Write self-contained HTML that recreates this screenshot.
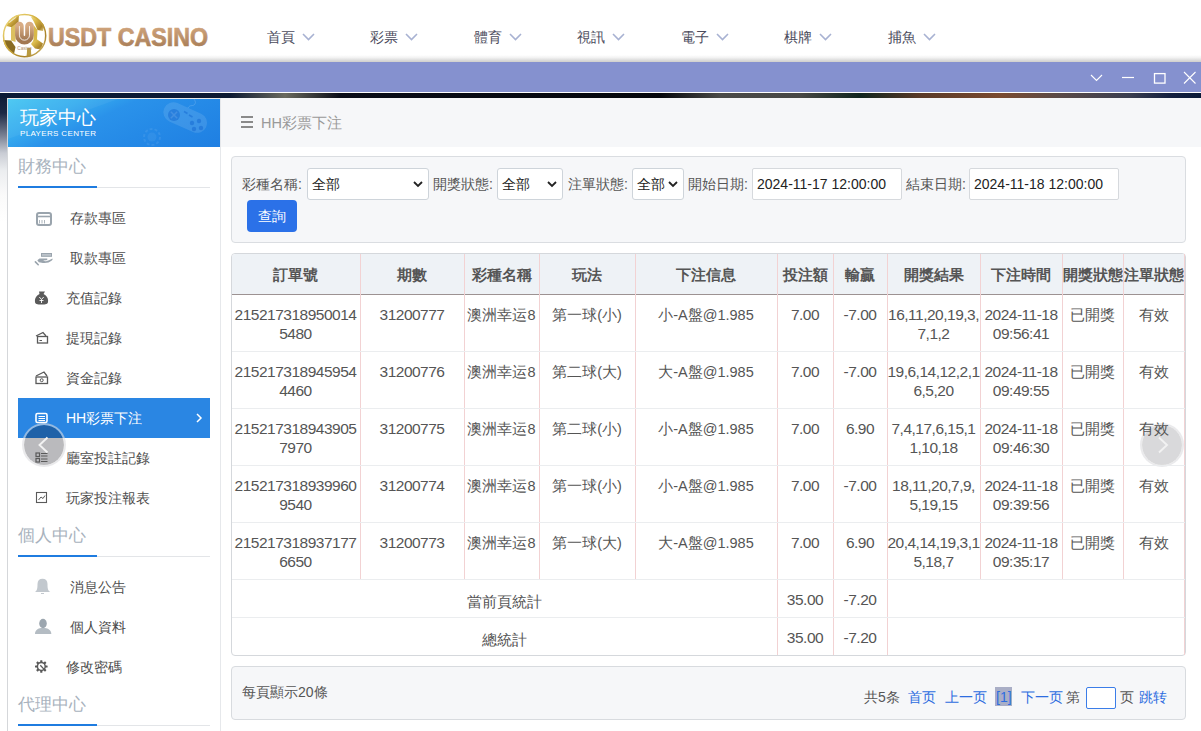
<!DOCTYPE html><html><head><meta charset="utf-8"><style>
*{box-sizing:border-box;margin:0;padding:0}
html,body{width:1201px;height:731px;overflow:hidden;background:#fff;font-family:"Liberation Sans",sans-serif;color:#333}
.abs{position:absolute}
.t{position:absolute;white-space:nowrap}
#hdr{left:0;top:0;width:1201px;height:62px;background:linear-gradient(#fff 0,#fff 55px,#f3f3f3 57.5px,#d9d9d9 60.5px,#d0cfcb 62px)}
#purple{left:0;top:62px;width:1201px;height:30px;background:#8591cf}
#wline{left:0;top:92px;width:1201px;height:1px;background:#fff}
#bgimg{left:0;top:93px;width:1201px;height:638px;background:linear-gradient(#0d1a35 0,#1c2944 20px,#7b8294 43px,#c9ccd4 60px,#eceef0 78px,#fafafa 102px,#fff 130px,#fff 100%)}
#strip{left:0;top:93px;width:1201px;height:5px;background:linear-gradient(90deg,#0b1a36 0px,#0d1a33 230px,#6a6a5e 285px,#0a0d18 340px,#05070c 660px,#4a4a48 720px,#484846 800px,#10251f 860px,#5a3a28 920px,#7a4a30 1000px,#5a4a48 1060px,#3a3e50 1130px,#142040 1170px,#0a1a38 1201px)}
#panel{left:7px;top:98px;width:1194px;height:633px;background:#fff;border-left:1px solid #d5d7da;border-top:1px solid #e8e8e8}
#pc{left:8px;top:99px;width:212px;height:48px;overflow:hidden;background:linear-gradient(155deg,#46c6f2 0,#36acef 25%,#2a92ea 42%,#258ae7 65%,#1f7fe2 100%)}
#crumb{left:220px;top:98px;width:981px;height:49px;background:#f6f7f9}
#sideborder{left:220px;top:98px;width:1px;height:633px;background:#e6e8eb}
.nav{position:absolute;top:28px;padding-left:1px;font-size:14px;color:#4b4b5c;line-height:18px;white-space:nowrap}
.nav svg{position:absolute;left:36px;top:5px}
.sh{position:absolute;left:18px;font-size:17px;color:#a8b2bd;line-height:20px;white-space:nowrap}
.shl{position:absolute;left:18px;width:192px;height:1px;background:#e3e5e8}
.shb{position:absolute;left:18px;width:79px;height:2px;background:#1f7ce0}
.mi{position:absolute;font-size:14px;color:#4d4d4d;line-height:18px;white-space:nowrap}
.ico{position:absolute}
.lbl{position:absolute;top:175px;font-size:14px;color:#555;line-height:18px;white-space:nowrap}
.sel{position:absolute;top:168px;height:32px;background:#fff;border:1px solid #ced4da;border-radius:3px;font-size:14px;color:#222;line-height:30px;padding-left:4px;white-space:nowrap}
.sel svg{position:absolute;right:5px;top:11px}
.th{position:absolute;top:254px;height:41px;line-height:41px;text-align:center;font-size:15px;font-weight:bold;color:#555;white-space:nowrap}
.td{position:absolute;text-align:center;font-size:15.5px;color:#555;line-height:19px;white-space:nowrap;letter-spacing:-0.5px}
.tc{position:absolute;text-align:center;font-size:14.5px;color:#555;line-height:19px;white-space:nowrap}
.vl{position:absolute;width:1px;background:#f2d2d3}
.hl{position:absolute;height:1px;background:#ebedef}
.pg{position:absolute;top:688px;font-size:14px;line-height:18px;white-space:nowrap;color:#555}
.bl{color:#2d6de0}
</style></head><body>
<div id="hdr" class="abs"></div>
<svg class="abs" style="left:0;top:8px" width="215" height="54" viewBox="0 0 215 54">
<defs>
<linearGradient id="gold" x1="0" y1="0" x2="1" y2="1"><stop offset="0" stop-color="#f0de8a"/><stop offset=".4" stop-color="#d6b444"/><stop offset=".75" stop-color="#a8822a"/><stop offset="1" stop-color="#e6d282"/></linearGradient>
<linearGradient id="cop" x1="0" y1="0" x2="0" y2="1"><stop offset="0" stop-color="#d8ac84"/><stop offset="1" stop-color="#a27852"/></linearGradient>
<clipPath id="ball"><circle cx="24.6" cy="27.65" r="21.8"/></clipPath>
</defs>
<circle cx="24.6" cy="27.65" r="21.8" fill="#fff"/>
<g clip-path="url(#ball)">
<polygon points="31,9 36,7 41,10.5 44.5,17 43,23 37.5,22 34,14" fill="url(#gold)"/>
<polygon points="8.5,12 13.5,7.5 19,6.800000000000001 18.5,14 13,19.5 6.5,18" fill="url(#gold)"/>
<polygon points="2.5,32 11,32.5 15.5,39 14,46 8,42.5 4,37" fill="#8a6c22"/>
<polygon points="35,30 43,35.5 41,41.5 35,40.5 31,36" fill="url(#gold)"/>
<polygon points="27.2,40 30.8,40 31.5,50 26.5,50" fill="#b89a40"/>
<polygon points="11,19.5 16,15.5 15.5,34 11,32.5" fill="#dcc060"/>
<polygon points="33.5,17 37.5,22 37,31.5 33.5,34" fill="#d8b848"/>
<path d="M9 14.5 L16 9" stroke="#fff" stroke-width="1.5" opacity=".7"/>
</g>
<circle cx="24.6" cy="27.65" r="21.1" fill="none" stroke="url(#gold)" stroke-width="1.5"/>
<path d="M19.4 18.1 V27.15 a5.05 5.05 0 0 0 10.1 0 V18.1" fill="none" stroke="url(#cop)" stroke-width="8.6" stroke-linecap="round"/>
<path d="M19.4 18.1 V27.15 a5.05 5.05 0 0 0 10.1 0 V18.1" fill="none" stroke="#fff" stroke-width="0.9" opacity=".9"/>
<text x="24.5" y="41.8" font-size="4.6" fill="#b09070" text-anchor="middle" font-family="Liberation Sans">Casino</text>
<text x="48" y="37.6" font-size="25.3" font-weight="bold" fill="url(#cop)" stroke="url(#cop)" stroke-width="0.7" font-family="Liberation Sans" textLength="160" lengthAdjust="spacingAndGlyphs">USDT CASINO</text>
</svg>
<div class="nav" style="left:266px">首頁<svg width="13" height="8" viewBox="0 0 13 8"><path d="M1 1 L6.5 6.5 L12 1" fill="none" stroke="#a8b2d2" stroke-width="1.6"/></svg></div>
<div class="nav" style="left:369px">彩票<svg width="13" height="8" viewBox="0 0 13 8"><path d="M1 1 L6.5 6.5 L12 1" fill="none" stroke="#a8b2d2" stroke-width="1.6"/></svg></div>
<div class="nav" style="left:473px">體育<svg width="13" height="8" viewBox="0 0 13 8"><path d="M1 1 L6.5 6.5 L12 1" fill="none" stroke="#a8b2d2" stroke-width="1.6"/></svg></div>
<div class="nav" style="left:576px">視訊<svg width="13" height="8" viewBox="0 0 13 8"><path d="M1 1 L6.5 6.5 L12 1" fill="none" stroke="#a8b2d2" stroke-width="1.6"/></svg></div>
<div class="nav" style="left:680px">電子<svg width="13" height="8" viewBox="0 0 13 8"><path d="M1 1 L6.5 6.5 L12 1" fill="none" stroke="#a8b2d2" stroke-width="1.6"/></svg></div>
<div class="nav" style="left:783px">棋牌<svg width="13" height="8" viewBox="0 0 13 8"><path d="M1 1 L6.5 6.5 L12 1" fill="none" stroke="#a8b2d2" stroke-width="1.6"/></svg></div>
<div class="nav" style="left:887px">捕魚<svg width="13" height="8" viewBox="0 0 13 8"><path d="M1 1 L6.5 6.5 L12 1" fill="none" stroke="#a8b2d2" stroke-width="1.6"/></svg></div>
<div id="purple" class="abs"></div>
<svg class="abs" style="left:1085px;top:68px" width="116" height="20" viewBox="1085 68 116 20">
<path d="M1091 75 L1096.5 80.5 L1102 75" fill="none" stroke="#fff" stroke-width="1.1"/>
<path d="M1122 77.5 H1134" stroke="#fff" stroke-width="1.2"/>
<rect x="1154.5" y="73.6" width="10.5" height="9.5" fill="none" stroke="#fff" stroke-width="1.3"/>
<path d="M1184 72 L1195.5 83.5 M1195.5 72 L1184 83.5" stroke="#fff" stroke-width="1.1"/>
</svg>
<div id="wline" class="abs"></div>
<div id="bgimg" class="abs"></div>
<div id="strip" class="abs"></div>
<div id="panel" class="abs"></div>
<div id="pc" class="abs">
<svg class="abs" style="left:0;top:0" width="212" height="48" viewBox="0 0 212 48">
<path d="M0 0 H110 L0 40 Z" fill="#fff" opacity=".05"/>
<g transform="rotate(24 177 19)"><rect x="154" y="8.5" width="46" height="20" rx="10" fill="#fff" opacity=".11"/></g>
<circle cx="166" cy="16" r="6" fill="#1468d2" opacity=".5"/>
<path d="M162.8 12.8 L169.2 19.2 M169.2 12.8 L162.8 19.2" stroke="#fff" stroke-width="1.5" opacity=".12"/>
<path d="M176 12.5 L179.5 14.5 M181 16 L184.5 18" stroke="#1468d2" stroke-width="1.6" opacity=".5"/>
<g fill="#1468d2" opacity=".5"><circle cx="184" cy="24" r="2.2"/><circle cx="191" cy="22" r="2.2"/><circle cx="186" cy="30" r="2.2"/><circle cx="193" cy="29" r="2.2"/></g>
<path d="M180 9 C182 5 185 8 187 5 C188 3 187 1 185 -1" stroke="#fff" stroke-width="1" opacity=".15" fill="none"/>
<circle cx="144" cy="38" r="8" fill="none" stroke="#fff" stroke-width="2" opacity=".08" stroke-dasharray="3 2"/>
<circle cx="144" cy="38" r="4.5" fill="#fff" opacity=".06"/>
<text x="12" y="24.5" font-size="19" fill="#fff" font-family="Liberation Sans">玩家中心</text>
<text x="12" y="36.8" font-size="8" fill="#fff" font-family="Liberation Sans" textLength="76" lengthAdjust="spacing">PLAYERS  CENTER</text>
</svg></div>
<div class="sh" style="top:157px">財務中心</div>
<div class="shl" style="top:187px"></div>
<div class="shb" style="top:186px"></div>
<div class="sh" style="top:526px">個人中心</div>
<div class="shl" style="top:556px"></div>
<div class="shb" style="top:555px"></div>
<div class="sh" style="top:695px">代理中心</div>
<div class="shl" style="top:725px"></div>
<div class="shb" style="top:724px"></div>
<div class="abs" style="left:18px;top:398px;width:192px;height:40px;background:#2a86e3"></div>
<div class="abs" style="left:22px;top:423px;width:44px;height:44px;border-radius:50%;background:rgba(0,0,12,0.27);background-clip:padding-box;border:2px solid rgba(220,220,224,.6)"></div>
<svg class="abs" style="left:0;top:0" width="1201" height="731" viewBox="0 0 1201 731"><path d="M47.5 437.5 L39.5 445 L47.5 452.5" fill="none" stroke="#f2f2f2" stroke-width="1.9"/></svg>
<svg class="abs" style="left:195px;top:412px" width="8" height="12" viewBox="0 0 8 12"><path d="M2 2 L6 6 L2 10" fill="none" stroke="#fff" stroke-width="1.5"/></svg>
<div class="mi" style="left:70px;top:209px;color:#4d4d4d">存款專區</div>
<div class="mi" style="left:70px;top:249px;color:#4d4d4d">取款專區</div>
<div class="mi" style="left:66px;top:289px;color:#4d4d4d">充值記錄</div>
<div class="mi" style="left:66px;top:329px;color:#4d4d4d">提現記錄</div>
<div class="mi" style="left:66px;top:369px;color:#4d4d4d">資金記錄</div>
<div class="mi" style="left:66px;top:409px;color:#fff">HH彩票下注</div>
<div class="mi" style="left:66px;top:449px;color:#4d4d4d">廳室投註記錄</div>
<div class="mi" style="left:66px;top:489px;color:#4d4d4d">玩家投注報表</div>
<div class="mi" style="left:70px;top:578px;color:#4d4d4d">消息公告</div>
<div class="mi" style="left:70px;top:618px;color:#4d4d4d">個人資料</div>
<div class="mi" style="left:66px;top:658px;color:#4d4d4d">修改密碼</div>
<svg class="abs" style="left:0;top:0;width:220px;height:731px" viewBox="0 0 220 731">
<!-- card -->
<rect x="37" y="213" width="14" height="12" rx="2" fill="none" stroke="#9aa4ad" stroke-width="2"/>
<path d="M37 216.5 H51" stroke="#9aa4ad" stroke-width="1.6"/>
<path d="M39.5 220 V223.5 M42 220 V223.5 M44.5 220 V223.5" stroke="#9aa4ad" stroke-width="0.8"/>
<!-- hand cash -->
<rect x="41.5" y="253.5" width="10" height="2.8" fill="#bcc3ca" stroke="#9aa4ad" stroke-width="1"/>
<path d="M37.3 260.3 L39.5 258.6 H47.2 Q48 259.6 46.5 260.2 L43.2 260.6 Q44 261.3 46 261.2 L49 260.2 L52.5 258.4 Q53 259.5 51.5 260.8 L48.5 262.6 Q46 263.2 43 263 L38.8 262.3 Z" fill="#9aa4ad"/>
<path d="M35.4 261.9 L38.2 264.7" stroke="#9aa4ad" stroke-width="1.6" stroke-linecap="round"/>
<!-- money bag -->
<path d="M39 291.5 H45 L43.5 294 C47 295.5 48.5 299 48 302 C47.7 304 46 304.5 41.5 304.5 C37 304.5 35.3 304 35 302 C34.5 299 36 295.5 39.5 294 Z" fill="#5a5a5a"/>
<path d="M39.3 297 L41.5 299.5 L43.7 297 M41.5 299.5 V303 M39.5 300.5 H43.5" stroke="#fff" stroke-width="0.9" fill="none"/>
<!-- cards stacked -->
<path d="M36 336 L43 332.5 L46 336" fill="none" stroke="#5a5a5a" stroke-width="1.3"/>
<rect x="37.5" y="336.5" width="10" height="6.5" fill="none" stroke="#5a5a5a" stroke-width="1.3"/>
<path d="M39.5 340.5 H42" stroke="#5a5a5a" stroke-width="1"/>
<!-- cash stack -->
<path d="M36 376 L44 372 L47 376" fill="none" stroke="#5a5a5a" stroke-width="1.3"/>
<rect x="36" y="377" width="11.5" height="6.5" fill="none" stroke="#5a5a5a" stroke-width="1.3"/>
<circle cx="41.7" cy="380.2" r="1.5" fill="none" stroke="#5a5a5a" stroke-width="1"/>
<!-- list white -->
<rect x="36" y="413.5" width="11" height="9" rx="1.5" fill="none" stroke="#fff" stroke-width="1.6"/>
<path d="M38.5 416.5 H45 M38.5 418.5 H45 M38.5 420.5 H45" stroke="#fff" stroke-width="1"/>
<!-- list bullets -->
<rect x="36" y="453" width="3.5" height="3.5" fill="none" stroke="#5a5a5a" stroke-width="1.2"/>
<rect x="36" y="458.5" width="3.5" height="3.5" fill="none" stroke="#5a5a5a" stroke-width="1.2"/>
<path d="M41 453.5 H47.5 M41 456 H47.5 M41 459 H47.5 M41 461.5 H47.5" stroke="#5a5a5a" stroke-width="1"/>
<!-- chart -->
<rect x="36.5" y="492.5" width="10" height="10" fill="none" stroke="#5a5a5a" stroke-width="1.1"/>
<path d="M38.5 500 L41 497 L43 498.5 L45 495.5" fill="none" stroke="#5a5a5a" stroke-width="1"/>
<!-- bell -->
<path d="M35 592 C37 590.5 37.5 589 37.5 584 C37.5 580.5 39.5 578.7 42.5 578.7 C45.5 578.7 47.5 580.5 47.5 584 C47.5 589 48 590.5 50.3 592 Z" fill="#c2c8ce"/>
<path d="M41 593.5 H44" stroke="#c2c8ce" stroke-width="1"/>
<!-- user -->
<ellipse cx="43" cy="623.5" rx="3.8" ry="4.7" fill="#9ca6af"/>
<path d="M35 634 C35 630 38 628.5 41 628 L45 628 C48 628.5 51.3 630 51.3 634 Z" fill="#b4bcc3"/>
<!-- gear -->
<g transform="translate(41.3 666.5)" fill="#5a5a5a">
<rect x="-1.1" y="-6.3" width="2.2" height="2.6" rx="0.5" transform="rotate(0)"/><rect x="-1.1" y="-6.3" width="2.2" height="2.6" rx="0.5" transform="rotate(45)"/><rect x="-1.1" y="-6.3" width="2.2" height="2.6" rx="0.5" transform="rotate(90)"/><rect x="-1.1" y="-6.3" width="2.2" height="2.6" rx="0.5" transform="rotate(135)"/><rect x="-1.1" y="-6.3" width="2.2" height="2.6" rx="0.5" transform="rotate(180)"/><rect x="-1.1" y="-6.3" width="2.2" height="2.6" rx="0.5" transform="rotate(225)"/><rect x="-1.1" y="-6.3" width="2.2" height="2.6" rx="0.5" transform="rotate(270)"/><rect x="-1.1" y="-6.3" width="2.2" height="2.6" rx="0.5" transform="rotate(315)"/>
<circle r="3.9" fill="none" stroke="#5a5a5a" stroke-width="1.5"/>
<path d="M-1 -1.2 L2.6 2.6" stroke="#5a5a5a" stroke-width="1.3"/>
</g>
</svg>
<div id="crumb" class="abs"></div>
<div id="sideborder" class="abs"></div>
<svg class="abs" style="left:241px;top:115px" width="13" height="14" viewBox="0 0 13 14"><path d="M0 2 H12 M0 7 H12 M0 12 H12" stroke="#8a8a8a" stroke-width="2"/></svg>
<div class="t" style="left:261px;top:114px;font-size:14.5px;line-height:18px;color:#9a9a9a">HH彩票下注</div>
<div class="abs" style="left:231px;top:156px;width:955px;height:87px;background:#f6f7f9;border:1px solid #dadde1;border-radius:4px"></div>
<div class="lbl" style="left:242px">彩種名稱:</div>
<div class="lbl" style="left:433px">開獎狀態:</div>
<div class="lbl" style="left:568px">注單狀態:</div>
<div class="lbl" style="left:688px">開始日期:</div>
<div class="lbl" style="left:906px">結束日期:</div>
<div class="sel" style="left:307px;width:122px">全部<svg width="10" height="8" viewBox="0 0 10 8"><path d="M1 2 L5 6 L9 2" fill="none" stroke="#222" stroke-width="1.8"/></svg></div>
<div class="sel" style="left:497px;width:66px">全部<svg width="10" height="8" viewBox="0 0 10 8"><path d="M1 2 L5 6 L9 2" fill="none" stroke="#222" stroke-width="1.8"/></svg></div>
<div class="sel" style="left:632px;width:52px">全部<svg width="10" height="8" viewBox="0 0 10 8"><path d="M1 2 L5 6 L9 2" fill="none" stroke="#222" stroke-width="1.8"/></svg></div>
<div class="sel" style="left:752px;width:150px;border-color:#d6d9dd;border-radius:2px;padding-left:4px">2024-11-17 12:00:00</div>
<div class="sel" style="left:969px;width:150px;border-color:#d6d9dd;border-radius:2px;padding-left:4px">2024-11-18 12:00:00</div>
<div class="abs" style="left:247px;top:200px;width:50px;height:32px;background:#2b71e8;border-radius:4px;color:#fff;font-size:14px;line-height:32px;text-align:center">查詢</div>
<div class="abs" style="left:231px;top:253px;width:955px;height:403px;border:1px solid #d5d8dc;border-radius:4px;background:#fff"></div>
<div class="abs" style="left:232px;top:254px;width:953px;height:40px;background:#eef2f6;border-radius:3px 3px 0 0"></div>
<div class="abs" style="left:1140px;top:423px;width:44px;height:44px;border-radius:50%;background:rgba(0,0,12,0.15);background-clip:padding-box;border:2px solid rgba(220,220,224,.6)"></div>
<svg class="abs" style="left:0;top:0" width="1201" height="731" viewBox="0 0 1201 731"><path d="M1159 437.5 L1167 445 L1159 452.5" fill="none" stroke="#f2f2f2" stroke-width="1.9"/></svg>
<div class="th" style="left:231px;width:129px">訂單號</div>
<div class="th" style="left:360px;width:104px">期數</div>
<div class="th" style="left:464px;width:75px">彩種名稱</div>
<div class="th" style="left:539px;width:96px">玩法</div>
<div class="th" style="left:635px;width:142px">下注信息</div>
<div class="th" style="left:777px;width:56px">投注額</div>
<div class="th" style="left:833px;width:54px">輸贏</div>
<div class="th" style="left:887px;width:93px">開獎結果</div>
<div class="th" style="left:980px;width:82px">下注時間</div>
<div class="th" style="left:1062px;width:61px">開獎狀態</div>
<div class="th" style="left:1123px;width:61px">注單狀態</div>
<div class="abs" style="left:232px;top:294px;width:953px;height:1px;background:#9c9292"></div>
<div class="vl" style="left:360px;top:254px;height:325px"></div>
<div class="vl" style="left:464px;top:254px;height:325px"></div>
<div class="vl" style="left:539px;top:254px;height:325px"></div>
<div class="vl" style="left:635px;top:254px;height:325px"></div>
<div class="vl" style="left:777px;top:254px;height:325px"></div>
<div class="vl" style="left:833px;top:254px;height:325px"></div>
<div class="vl" style="left:887px;top:254px;height:325px"></div>
<div class="vl" style="left:980px;top:254px;height:325px"></div>
<div class="vl" style="left:1062px;top:254px;height:325px"></div>
<div class="vl" style="left:1123px;top:254px;height:325px"></div>
<div class="vl" style="left:1184px;top:254px;height:325px"></div>
<div class="vl" style="left:777px;top:579px;height:76px"></div>
<div class="vl" style="left:833px;top:579px;height:76px"></div>
<div class="vl" style="left:887px;top:579px;height:76px"></div>
<div class="vl" style="left:1184px;top:579px;height:76px"></div>
<div class="hl" style="left:232px;top:351px;width:953px"></div>
<div class="hl" style="left:232px;top:408px;width:953px"></div>
<div class="hl" style="left:232px;top:465px;width:953px"></div>
<div class="hl" style="left:232px;top:522px;width:953px"></div>
<div class="hl" style="left:232px;top:579px;width:953px"></div>
<div class="hl" style="left:232px;top:617px;width:953px"></div>
<div class="td" style="left:231px;width:129px;top:305px">215217318950014<br>5480</div>
<div class="td" style="left:360px;width:104px;top:305px">31200777</div>
<div class="tc" style="left:464px;width:75px;top:306px">澳洲幸运8</div>
<div class="tc" style="left:539px;width:96px;top:306px">第一球(小)</div>
<div class="tc" style="left:635px;width:142px;top:306px">小-A盤@1.985</div>
<div class="td" style="left:777px;width:56px;top:305px">7.00</div>
<div class="td" style="left:833px;width:54px;top:305px">-7.00</div>
<div class="td" style="left:887px;width:93px;top:305px">16,11,20,19,3,<br>7,1,2</div>
<div class="td" style="left:980px;width:82px;top:305px">2024-11-18<br>09:56:41</div>
<div class="tc" style="left:1062px;width:61px;top:306px">已開獎</div>
<div class="tc" style="left:1123px;width:61px;top:306px">有效</div>
<div class="td" style="left:231px;width:129px;top:362px">215217318945954<br>4460</div>
<div class="td" style="left:360px;width:104px;top:362px">31200776</div>
<div class="tc" style="left:464px;width:75px;top:363px">澳洲幸运8</div>
<div class="tc" style="left:539px;width:96px;top:363px">第二球(大)</div>
<div class="tc" style="left:635px;width:142px;top:363px">大-A盤@1.985</div>
<div class="td" style="left:777px;width:56px;top:362px">7.00</div>
<div class="td" style="left:833px;width:54px;top:362px">-7.00</div>
<div class="td" style="left:887px;width:93px;top:362px">19,6,14,12,2,1<br>6,5,20</div>
<div class="td" style="left:980px;width:82px;top:362px">2024-11-18<br>09:49:55</div>
<div class="tc" style="left:1062px;width:61px;top:363px">已開獎</div>
<div class="tc" style="left:1123px;width:61px;top:363px">有效</div>
<div class="td" style="left:231px;width:129px;top:419px">215217318943905<br>7970</div>
<div class="td" style="left:360px;width:104px;top:419px">31200775</div>
<div class="tc" style="left:464px;width:75px;top:420px">澳洲幸运8</div>
<div class="tc" style="left:539px;width:96px;top:420px">第二球(小)</div>
<div class="tc" style="left:635px;width:142px;top:420px">小-A盤@1.985</div>
<div class="td" style="left:777px;width:56px;top:419px">7.00</div>
<div class="td" style="left:833px;width:54px;top:419px">6.90</div>
<div class="td" style="left:887px;width:93px;top:419px">7,4,17,6,15,1<br>1,10,18</div>
<div class="td" style="left:980px;width:82px;top:419px">2024-11-18<br>09:46:30</div>
<div class="tc" style="left:1062px;width:61px;top:420px">已開獎</div>
<div class="tc" style="left:1123px;width:61px;top:420px">有效</div>
<div class="td" style="left:231px;width:129px;top:476px">215217318939960<br>9540</div>
<div class="td" style="left:360px;width:104px;top:476px">31200774</div>
<div class="tc" style="left:464px;width:75px;top:477px">澳洲幸运8</div>
<div class="tc" style="left:539px;width:96px;top:477px">第一球(小)</div>
<div class="tc" style="left:635px;width:142px;top:477px">小-A盤@1.985</div>
<div class="td" style="left:777px;width:56px;top:476px">7.00</div>
<div class="td" style="left:833px;width:54px;top:476px">-7.00</div>
<div class="td" style="left:887px;width:93px;top:476px">18,11,20,7,9,<br>5,19,15</div>
<div class="td" style="left:980px;width:82px;top:476px">2024-11-18<br>09:39:56</div>
<div class="tc" style="left:1062px;width:61px;top:477px">已開獎</div>
<div class="tc" style="left:1123px;width:61px;top:477px">有效</div>
<div class="td" style="left:231px;width:129px;top:533px">215217318937177<br>6650</div>
<div class="td" style="left:360px;width:104px;top:533px">31200773</div>
<div class="tc" style="left:464px;width:75px;top:534px">澳洲幸运8</div>
<div class="tc" style="left:539px;width:96px;top:534px">第一球(大)</div>
<div class="tc" style="left:635px;width:142px;top:534px">大-A盤@1.985</div>
<div class="td" style="left:777px;width:56px;top:533px">7.00</div>
<div class="td" style="left:833px;width:54px;top:533px">6.90</div>
<div class="td" style="left:887px;width:93px;top:533px">20,4,14,19,3,1<br>5,18,7</div>
<div class="td" style="left:980px;width:82px;top:533px">2024-11-18<br>09:35:17</div>
<div class="tc" style="left:1062px;width:61px;top:534px">已開獎</div>
<div class="tc" style="left:1123px;width:61px;top:534px">有效</div>
<div class="tc" style="left:231px;width:546px;top:593px">當前頁統計</div>
<div class="td" style="left:777px;width:56px;top:590px">35.00</div>
<div class="td" style="left:833px;width:54px;top:590px">-7.20</div>
<div class="tc" style="left:231px;width:546px;top:631px">總統計</div>
<div class="td" style="left:777px;width:56px;top:628px">35.00</div>
<div class="td" style="left:833px;width:54px;top:628px">-7.20</div>
<div class="abs" style="left:231px;top:666px;width:955px;height:54px;background:#f6f7f9;border:1px solid #d8dbdf;border-radius:4px"></div>
<div class="pg" style="left:242px;top:683px">每頁顯示20條</div>
<div class="abs" style="left:995px;top:687px;width:17px;height:19px;background:#a9aec6"></div>
<div class="abs" style="left:1086px;top:687px;width:30px;height:22px;border:1px solid #3b7de8;border-radius:2px;background:#fff"></div>
<div class="pg " style="left:864px">共5条</div>
<div class="pg bl" style="left:908px">首页</div>
<div class="pg bl" style="left:945px">上一页</div>
<div class="pg bl" style="left:996px">[1]</div>
<div class="pg bl" style="left:1021px">下一页</div>
<div class="pg " style="left:1066px">第</div>
<div class="pg " style="left:1120px">页</div>
<div class="pg bl" style="left:1139px">跳转</div>
</body></html>
